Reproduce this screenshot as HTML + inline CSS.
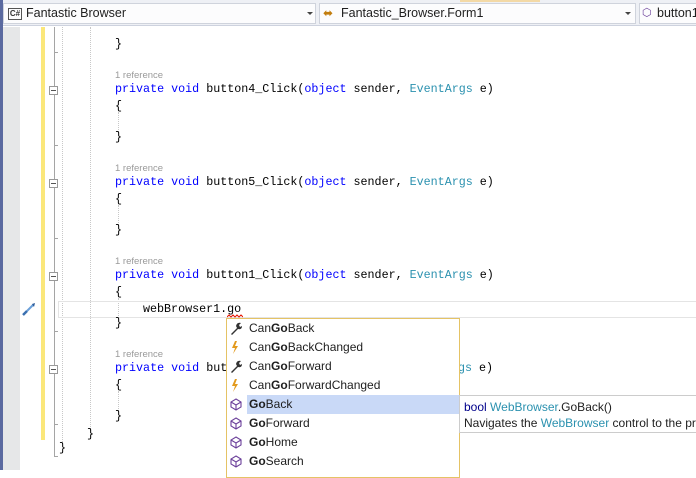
<!DOCTYPE html>
<html><head><style>
*{margin:0;padding:0;box-sizing:border-box}
body{width:696px;height:470px;overflow:hidden;background:#fff;position:relative;font-family:"Liberation Sans",sans-serif}
.a{position:absolute;white-space:pre}
.c{font-family:"Liberation Mono",monospace;font-size:11.7px;color:#000}
.k{color:#0000ff}.t{color:#2b91af}
.r{font-size:9.5px;color:#9a9a9a;font-family:"Liberation Sans",sans-serif}
.cb{position:absolute;top:3px;height:21px;background:#fcfcfd;border:1px solid #cfd3dc;font-size:12.5px;line-height:19px;color:#1e1e1e;overflow:hidden}
.dd{position:absolute;top:8px;width:0;height:0;border-left:3px solid transparent;border-right:3px solid transparent;border-top:3px solid #444}
.box{position:absolute;width:9px;height:9px;border:1px solid #999;background:#fff}
.box:after{content:"";position:absolute;left:1px;top:3px;width:5px;height:1px;background:#555}
.vl{position:absolute;border-left:1px dotted #c8c8c8}
.it{position:absolute;left:249px;height:19px;line-height:19px;font-size:12px;color:#1e1e1e}
</style></head><body>
<div class="a" style="left:0;top:0;width:696px;height:26px;background:#eef0f5;border-bottom:1px solid #cdd2de"></div>
<div class="a" style="left:460px;top:0;width:80px;height:2px;background:#f3d9a6"></div>
<div class="cb" style="left:3px;width:313px"><span style="position:absolute;left:4px;top:4px;width:14px;height:12px;border:1px solid #555;font-size:8px;line-height:10px;text-align:center;font-weight:bold;color:#333">C#</span><span style="position:absolute;left:22px">Fantastic Browser</span><div class="dd" style="left:303px"></div></div>
<div class="cb" style="left:319px;width:317px"><span style="position:absolute;left:3px;top:0;color:#c27d0e;font-size:12px">&#x2B0C;</span><span style="position:absolute;left:21px">Fantastic_Browser.Form1</span><div class="dd" style="left:305px"></div></div>
<div class="cb" style="left:639px;width:57px;border-right:none"><span style="position:absolute;left:2px;top:0;color:#6b3f9a;font-size:11px">&#x2B21;</span><span style="position:absolute;left:17px">button1</span></div>
<div class="a" style="left:0;top:0;width:3px;height:470px;background:#5b6aa0"></div>
<div class="a" style="left:3px;top:27px;width:17px;height:443px;background:#e6e7e8"></div>
<div class="a" style="left:41px;top:27px;width:4px;height:413px;background:#fbe77a"></div>
<div class="a" style="left:54px;top:27px;width:1px;height:430px;background:#a5a5a5"></div>
<div class="vl" style="left:62px;top:27px;height:417px"></div>
<div class="vl" style="left:90px;top:27px;height:410px"></div>
<div class="vl" style="left:118px;top:112px;height:20px"></div>
<div class="vl" style="left:118px;top:205px;height:20px"></div>
<div class="vl" style="left:118px;top:298px;height:20px"></div>
<div class="vl" style="left:118px;top:391px;height:20px"></div>
<div class="a" style="left:54px;top:52px;width:4px;height:1px;background:#a5a5a5"></div>
<div class="a" style="left:54px;top:145px;width:4px;height:1px;background:#a5a5a5"></div>
<div class="a" style="left:54px;top:238px;width:4px;height:1px;background:#a5a5a5"></div>
<div class="a" style="left:54px;top:331px;width:4px;height:1px;background:#a5a5a5"></div>
<div class="a" style="left:54px;top:424px;width:4px;height:1px;background:#a5a5a5"></div>
<div class="a" style="left:54px;top:456px;width:4px;height:1px;background:#a5a5a5"></div>
<div class="box" style="left:49px;top:86px"></div>
<div class="box" style="left:49px;top:179px"></div>
<div class="box" style="left:49px;top:272px"></div>
<div class="box" style="left:49px;top:365px"></div>
<div class="a c" style="left:115px;top:37px">}</div>
<div class="a r" style="left:115px;top:70px">1 reference</div>
<div class="a c" style="left:115px;top:82px"><span class="k">private</span> <span class="k">void</span> button4_Click(<span class="k">object</span> sender, <span class="t">EventArgs</span> e)</div>
<div class="a c" style="left:115px;top:99px">{</div>
<div class="a c" style="left:115px;top:130px">}</div>
<div class="a r" style="left:115px;top:163px">1 reference</div>
<div class="a c" style="left:115px;top:175px"><span class="k">private</span> <span class="k">void</span> button5_Click(<span class="k">object</span> sender, <span class="t">EventArgs</span> e)</div>
<div class="a c" style="left:115px;top:192px">{</div>
<div class="a c" style="left:115px;top:223px">}</div>
<div class="a r" style="left:115px;top:256px">1 reference</div>
<div class="a c" style="left:115px;top:268px"><span class="k">private</span> <span class="k">void</span> button1_Click(<span class="k">object</span> sender, <span class="t">EventArgs</span> e)</div>
<div class="a c" style="left:115px;top:285px">{</div>
<div class="a" style="left:58px;top:301px;width:638px;height:17px;border:1px solid #e4e4e4;border-right:none"></div>
<div class="a c" style="left:143px;top:302px">webBrowser1.go</div>
<svg class="a" style="left:227px;top:314px" width="16" height="4"><path d="M0 3 L2 1 L4 3 L6 1 L8 3 L10 1 L12 3 L14 1 L16 3" fill="none" stroke="#e51400" stroke-width="1"/></svg>
<svg class="a" style="left:20px;top:302px" width="18" height="16"><path d="M3 13 L7 9" stroke="#3a6fb0" stroke-width="2.5"/><path d="M7 9 L13 3" stroke="#6a9fd8" stroke-width="2"/><path d="M12 2 L15 1 L14 5Z" fill="#2e5c9a"/></svg>
<div class="a c" style="left:115px;top:316px">}</div>
<div class="a r" style="left:115px;top:349px">1 reference</div>
<div class="a c" style="left:115px;top:361px"><span class="k">private</span> <span class="k">void</span> butt</div>
<div class="a c" style="left:458px;top:361px"><span class="t">gs</span> e)</div>
<div class="a c" style="left:115px;top:378px">{</div>
<div class="a c" style="left:115px;top:409px">}</div>
<div class="a c" style="left:87px;top:427px">}</div>
<div class="a c" style="left:59px;top:441px">}</div>
<div class="a" style="left:226px;top:318px;width:234px;height:160px;background:#fff;border:1px solid #e5c365"></div>
<div class="a" style="left:247px;top:395px;width:212px;height:19px;background:#c9d9f7"></div>
<div class="it" style="top:319px">Can<b>Go</b>Back</div>
<div class="it" style="top:338px">Can<b>Go</b>BackChanged</div>
<div class="it" style="top:357px">Can<b>Go</b>Forward</div>
<div class="it" style="top:376px">Can<b>Go</b>ForwardChanged</div>
<div class="it" style="top:395px"><b>Go</b>Back</div>
<div class="it" style="top:414px"><b>Go</b>Forward</div>
<div class="it" style="top:433px"><b>Go</b>Home</div>
<div class="it" style="top:452px"><b>Go</b>Search</div>
<svg class="a" style="left:229px;top:321px" width="14" height="150">
<g fill="#333"><path d="M2 13 L8 7 L7 5 Q8 1 12 2 L10 4 L11 6 L13 5 Q13 9 9 8 L3 14Z"/><path d="M2 51 L8 45 L7 43 Q8 39 12 40 L10 42 L11 44 L13 43 Q13 47 9 46 L3 52Z"/></g>
<g fill="#e39a1d"><path d="M6 20 L3 27 L6 27 L4 33 L9 25 L6 25 L8 20Z"/><path d="M6 58 L3 65 L6 65 L4 71 L9 63 L6 63 L8 58Z"/></g>
<g fill="none" stroke="#6b3f9a" stroke-width="1.1"><path d="M7 78 L12 81 L12 86 L7 89 L2 86 L2 81Z M2 81 L7 84 L12 81 M7 84 L7 89"/><path d="M7 97 L12 100 L12 105 L7 108 L2 105 L2 100Z M2 100 L7 103 L12 100 M7 103 L7 108"/><path d="M7 116 L12 119 L12 124 L7 127 L2 124 L2 119Z M2 119 L7 122 L12 119 M7 122 L7 127"/><path d="M7 135 L12 138 L12 143 L7 146 L2 143 L2 138Z M2 138 L7 141 L12 138 M7 141 L7 146"/></g>
</svg>
<div class="a" style="left:459px;top:395px;width:237px;height:38px;background:#fff;border:1px solid #ccc;border-right:none;font-size:12px;line-height:16px;padding:3px 0 0 4px;color:#1e1e1e;overflow:hidden"><span style="color:#00008b">bool</span> <span class="t">WebBrowser</span>.GoBack()<br>Navigates the <span class="t">WebBrowser</span> control to the previous page</div>
</body></html>
